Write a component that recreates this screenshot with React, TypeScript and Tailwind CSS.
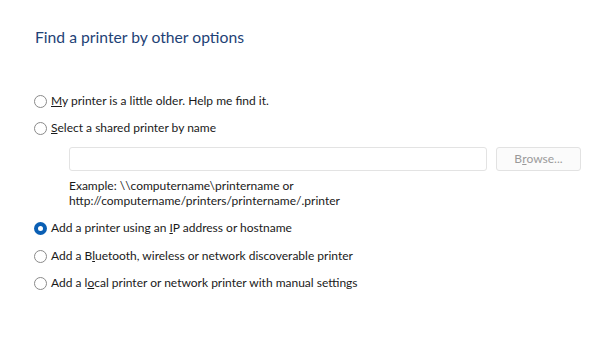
import React from "react";

const font = { fontFamily: 'Lato, "Noto Sans", sans-serif' };

function Radio({ checked }: { checked?: boolean }) {
  if (checked) {
    return (
      <span className="flex h-[13px] w-[13px] shrink-0 items-center justify-center rounded-full bg-[#0a5fb4]">
        <span className="h-[5px] w-[5px] rounded-full bg-white" />
      </span>
    );
  }
  return <span className="h-[13px] w-[13px] shrink-0 rounded-full border border-[#8a8a8a] bg-white" />;
}

function Option({ checked, children, className }: { checked?: boolean; children: React.ReactNode; className?: string }) {
  return (
    <div className={"flex h-[20px] items-center gap-[4px] pl-[34px] " + (className ?? "")}>
      <Radio checked={checked} />
      <span className="text-[12px] leading-[20px] text-[#1a1a1a] whitespace-nowrap">{children}</span>
    </div>
  );
}

export default function App() {
  return (
    <div className="h-[338px] w-[600px] overflow-hidden bg-white" style={font}>
      {/* Heading */}
      <div className="pl-[35px] pt-[26px] text-[15.7px] leading-[22px] text-[#1e4276]">
        Find a printer by other options
      </div>

      <Option className="mt-[43px]">
        <u>M</u>y printer is a little older. Help me find it.
      </Option>
      <Option className="mt-[7px]">
        <u>S</u>elect a shared printer by name
      </Option>

      {/* Shared printer name field */}
      <div className="mt-[9px] flex gap-[9px] pl-[69px]">
        <div className="h-[24px] w-[418px] rounded-[3px] border border-[#e3e3e3] bg-white" />
        <div className="flex h-[24px] w-[85px] items-center justify-center rounded-[3px] border border-[#e2e2e2] bg-[#fbfbfb] text-[12px] text-[#9a9a9a]">
          B<u>r</u>owse...
        </div>
      </div>

      <div className="mt-[7px] pl-[69px] text-[12px] leading-[15px] text-[#1a1a1a]">
        <div>Example: \\computername\printername or</div>
        <div>http://computername/printers/printername/.printer</div>
      </div>

      <Option checked className="mt-[10px]">
        Add a printer using an <u>I</u>P address or hostname
      </Option>
      <Option className="mt-[8px]">
        Add a B<u>l</u>uetooth, wireless or network discoverable printer
      </Option>
      <Option className="mt-[7px]">
        Add a l<u>o</u>cal printer or network printer with manual settings
      </Option>
    </div>
  );
}
